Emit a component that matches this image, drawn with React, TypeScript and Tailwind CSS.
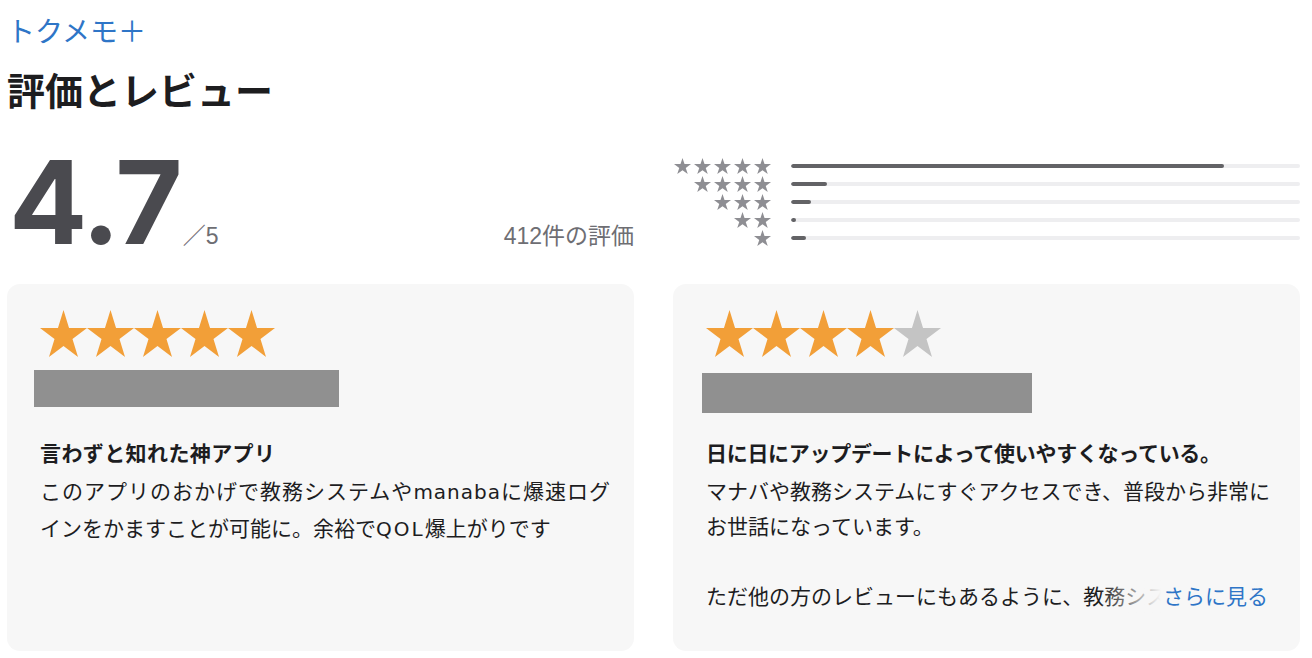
import React from "react";

const STAR_POINTS =
  "50,0 61.8,38.2 100,38.2 69.1,61.8 80.9,100 50,76.4 19.1,100 30.9,61.8 0,38.2 38.2,38.2";

function Star({ className, color }: { className: string; color: string }) {
  return (
    <svg viewBox="0 0 100 100" preserveAspectRatio="none" className={className}>
      <polygon points={STAR_POINTS} fill={color} />
    </svg>
  );
}

const hist = [
  { stars: 5, pct: 85 },
  { stars: 4, pct: 7 },
  { stars: 3, pct: 4 },
  { stars: 2, pct: 1 },
  { stars: 1, pct: 3 },
];

const jp = "font-['Noto_Sans_CJK_JP',sans-serif]";
const lat = "font-['DejaVu_Sans',sans-serif] text-[20px]";

function CardStars({ filled }: { filled: number }) {
  return (
    <div className="flex h-[47px]">
      {[0, 1, 2, 3, 4].map((i) => (
        <Star
          key={i}
          className="w-[47px] h-[47px] shrink-0"
          color={i < filled ? "#f29f38" : "#c4c4c4"}
        />
      ))}
    </div>
  );
}

export default function App() {
  return (
    <div className={`bg-white w-[1312px] h-[658px] overflow-hidden pl-[7px] pr-[12px] ${jp}`}>
      <div className="pt-[13px] text-[28px] leading-[34px] text-[#2e75c7] whitespace-nowrap">
        トクメモ＋
      </div>
      <h1 className="mt-[19px] text-[38px] leading-[46px] font-bold text-[#1d1d1f] whitespace-nowrap">
        評価とレビュー
      </h1>

      <div className="grid grid-cols-[627px_627px] gap-x-[39px] mt-[32px]">
        {/* rating summary */}
        <div className="flex items-baseline leading-none h-[116px]">
          <span className="ml-[2px] font-['Inter',sans-serif] font-bold text-[116px] leading-none text-[#4a4a4f] tracking-[-2px]">
            4.7
          </span>
          <span className="ml-[2px] text-[23px] leading-none text-[#6e6e73] font-['Liberation_Sans','Noto_Sans_CJK_JP',sans-serif]">
            ／5
          </span>
          <span className="ml-auto text-[23px] leading-none text-[#6e6e73] font-['Liberation_Sans','Noto_Sans_CJK_JP',sans-serif] whitespace-nowrap">
            412件の評価
          </span>
        </div>

        {/* histogram */}
        <div className="flex flex-col mt-[13px]">
          {hist.map((r) => (
            <div key={r.stars} className="flex items-center h-[18px]">
              <div className="w-[98px] flex justify-end gap-[3px]">
                {Array.from({ length: r.stars }).map((_, i) => (
                  <Star key={i} className="w-[17px] h-[16px] shrink-0" color="#8e8e93" />
                ))}
              </div>
              <div className="ml-[20px] flex-1 h-[4px] rounded-full bg-[#eeeef0] overflow-hidden">
                <div
                  className="h-full rounded-full bg-[#636366]"
                  style={{ width: `${r.pct}%` }}
                />
              </div>
            </div>
          ))}
        </div>
      </div>

      <div className="grid grid-cols-[627px_627px] gap-x-[39px] mt-[24px]">
        {/* left card */}
        <div className="h-[367px] rounded-[13px] bg-[#f7f7f7] pt-[26px] pl-[33px] pr-[26px]">
          <CardStars filled={5} />
          <div className="-ml-[6px] mt-[13px] w-[305px] h-[37px] bg-[#909090]" />
          <div className="mt-[28px] text-[21px] text-[#1d1d1f] whitespace-nowrap">
            <div className="font-bold leading-[35px] mb-[3px] tracking-[0.4px]">言わずと知れた神アプリ</div>
            <div className="leading-[35px] tracking-[1px]">
              このアプリのおかげで教務システムや<span className={lat}>manaba</span>に爆速ログ
            </div>
            <div className="leading-[35px]">
              インをかますことが可能に。余裕で<span className={`${lat} tracking-[2px]`}>QOL</span>爆上がりです
            </div>
          </div>
        </div>

        {/* right card */}
        <div className="h-[367px] rounded-[13px] bg-[#f7f7f7] pt-[26px] pl-[33px] pr-[32px]">
          <CardStars filled={4} />
          <div className="-ml-[4px] mt-[16px] w-[330px] h-[40px] bg-[#909090]" />
          <div className="mt-[22px] text-[21px] text-[#1d1d1f] whitespace-nowrap">
            <div className="font-bold leading-[35px] mb-[3px] tracking-[-0.3px]">
              日に日にアップデートによって使いやすくなっている。
            </div>
            <div className="leading-[35px]">マナバや教務システムにすぐアクセスでき、普段から非常に</div>
            <div className="leading-[35px]">お世話になっています。</div>
            <div className="h-[35px]" />
            <div className="relative leading-[35px] overflow-hidden">
              <span>ただ他の方のレビューにもあるように、教務システムのアクセス</span>
              <span className="absolute right-0 top-0 h-full flex">
                <span className="w-[62px] h-full bg-gradient-to-r from-[#f7f7f700] to-[#f7f7f7]" />
                <span className="bg-[#f7f7f7] text-[#2e75c7] pl-[2px]">さらに見る</span>
              </span>
            </div>
          </div>
        </div>
      </div>
    </div>
  );
}
